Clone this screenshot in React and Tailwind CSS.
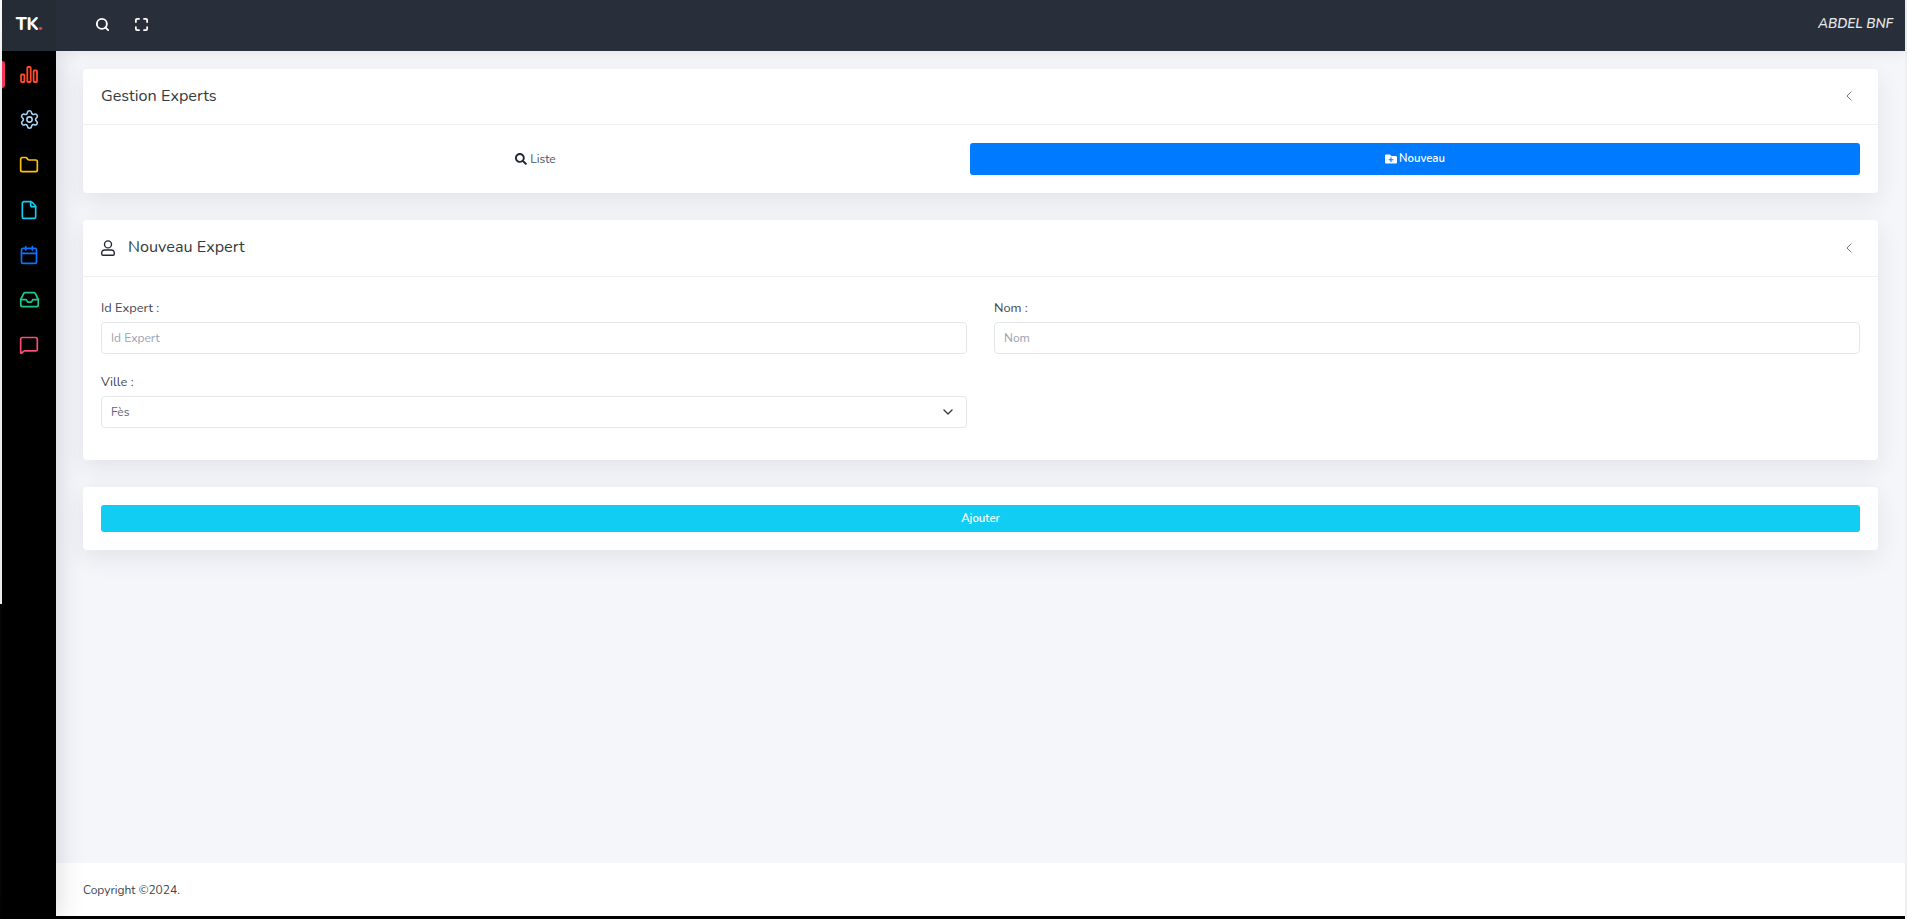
import React from "react";
import { Search, Maximize, Settings, Folder, File, Calendar, Inbox, MessageSquare, ChevronLeft, ChevronDown } from "lucide-react";
import { FaSearch, FaFolderPlus } from "react-icons/fa";

function Bars() {
  return (
    <svg width="18" height="17" viewBox="0 0 18 17" fill="none" stroke="#ff4a2b" strokeWidth="1.8">
      <rect x="1" y="8.5" width="3.4" height="7.5" rx="0.8" />
      <rect x="7.3" y="1" width="3.4" height="15" rx="0.8" />
      <rect x="13.6" y="4.5" width="3.4" height="11.5" rx="0.8" />
    </svg>
  );
}

function UserIcon() {
  return (
    <svg width="14" height="16" viewBox="0 0 14 16" fill="none" stroke="#1f2937" strokeWidth="1.4" className="mr-[13px] shrink-0">
      <circle cx="7" cy="4.4" r="3.5" />
      <path d="M3.6 10h6.8a2.9 2.9 0 0 1 2.9 2.9v1.1a1.3 1.3 0 0 1-1.3 1.3H2a1.3 1.3 0 0 1-1.3-1.3v-1.1A2.9 2.9 0 0 1 3.6 10z" />
    </svg>
  );
}

function CardHeader({ icon, title, tall }) {
  return (
    <div className={`${tall ? "h-[57px]" : "h-[56px]"} border-b border-[#eef0f3] px-[18px] flex items-center`}>
      {icon}
      <h2 className={`text-[16.2px] text-[#343a40] flex-1 ${tall ? "pb-[2px]" : "pb-[1px]"}`}>{title}</h2>
      <ChevronLeft size={16} strokeWidth={1.5} className="text-[#6b7785] mr-[3px] mb-[1px]" />
    </div>
  );
}

function Field({ label, children }) {
  return (
    <div className="flex-1 min-w-0">
      <label className="block text-[12.8px] leading-[18px] text-[#3f4650] mb-[5px]">{label}</label>
      {children}
    </div>
  );
}

export default function App() {
  const side = [
    <Bars />,
    <Settings size={21} color="#a8d4f5" strokeWidth={1.8} />,
    <Folder size={20} color="#ffc107" strokeWidth={2} />,
    <File size={20} color="#11cdef" strokeWidth={2} />,
    <Calendar size={20} color="#0a74ff" strokeWidth={2} />,
    <Inbox size={21} color="#1cc88a" strokeWidth={2} />,
    <MessageSquare size={20} color="#fb4d74" strokeWidth={2} />,
  ];
  return (
    <div className="w-[1907px] h-[919px] bg-black flex overflow-hidden font-['Nunito','Lato','Noto_Sans',sans-serif]">
      <div className="w-[2px] h-[604px] bg-white shrink-0" />
      <div className="flex-1 min-w-0 flex flex-col">
        <header className="h-[51px] shrink-0 flex items-center bg-[#282f3a] relative z-20 shadow-[0_2px_12px_rgba(40,47,58,0.08)]">
          <div className="w-[54px] h-full bg-[#262c36] flex items-center justify-center pb-[2px] text-white text-[17.5px] font-extrabold tracking-tight">
            TK<span className="text-[#f5365c]">.</span>
          </div>
          <div className="flex items-center gap-[24px] ml-[39px] pb-[3px]">
            <Search size={15} color="#fff" strokeWidth={3} />
            <Maximize size={15} color="#fff" strokeWidth={2.8} />
          </div>
          <span className="ml-auto mr-[12px] pb-[2px] text-[13.5px] italic font-semibold text-[#e6e8eb]">ABDEL BNF</span>
        </header>
        <div className="flex-1 min-h-0 flex">
          <aside className="w-[54px] shrink-0 bg-black relative z-10 pt-[1px] shadow-[0_0_28px_rgba(40,47,58,0.2)]">
            {side.map((el, i) => (
              <div key={i} className="relative h-[45px] flex items-center justify-center">
                {i === 0 && <span className="absolute left-0 top-[9px] w-[3px] h-[27px] bg-[#f5365c] rounded-r-sm" />}
                {el}
              </div>
            ))}
          </aside>
          <div className="flex-1 min-w-0 flex flex-col">
            <main className="flex-1 min-h-0 bg-[#f5f6fa] px-[27px] pt-[18px] flex flex-col gap-[27px]">
              <section className="bg-white rounded-[4px] shadow-[0_8px_24px_rgba(40,47,58,0.09)]">
                <CardHeader title="Gestion Experts" />
                <div className="p-[18px] flex">
                  <button className="flex-1 h-[32px] text-[12px] text-[#4b5563] flex items-center justify-center gap-[3px]">
                    <FaSearch size={12} color="#1f2937" /> Liste
                  </button>
                  <button className="w-[890px] h-[32px] rounded-[3px] bg-[#007bff] text-[11.4px] font-semibold text-white flex items-center justify-center gap-[2px]">
                    <FaFolderPlus size={12} /> Nouveau
                  </button>
                </div>
              </section>
              <section className="bg-white rounded-[4px] shadow-[0_8px_24px_rgba(40,47,58,0.09)]">
                <CardHeader title="Nouveau Expert" tall icon={<UserIcon />} />
                <div className="px-[18px] pt-[22px] pb-[32px] flex flex-col gap-[19px]">
                  <div className="flex gap-[27px]">
                    <Field label="Id Expert :">
                      <input placeholder="Id Expert" className="w-full h-[32px] border border-[#e4e7ea] rounded-[4px] px-[9px] text-[12px] placeholder:text-[#9aa3ad] outline-none" />
                    </Field>
                    <Field label="Nom :">
                      <input placeholder="Nom" className="w-full h-[32px] border border-[#e4e7ea] rounded-[4px] px-[9px] text-[12px] placeholder:text-[#9aa3ad] outline-none" />
                    </Field>
                  </div>
                  <div className="flex gap-[27px]">
                    <Field label="Ville :">
                      <div className="w-full h-[32px] border border-[#e4e7ea] rounded-[4px] px-[9px] text-[12px] text-[#5b6472] flex items-center justify-between">
                        <span>Fès</span>
                        <ChevronDown size={16} color="#343a40" className="mr-[1px]" />
                      </div>
                    </Field>
                    <div className="flex-1" />
                  </div>
                </div>
              </section>
              <section className="bg-white rounded-[4px] p-[18px] shadow-[0_8px_24px_rgba(40,47,58,0.09)]">
                <button className="block w-full h-[27px] rounded-[3px] bg-[#11cdf3] text-white text-[11.4px] font-semibold">Ajouter</button>
              </section>
            </main>
            <footer className="h-[53px] shrink-0 bg-white flex items-center pl-[27px] text-[12px] text-[#3f4650]">Copyright ©2024.</footer>
            <div className="h-[3px] shrink-0 bg-black" />
          </div>
        </div>
      </div>
      <div className="w-[2px] h-full bg-[#f0f0f2] shrink-0" />
    </div>
  );
}
